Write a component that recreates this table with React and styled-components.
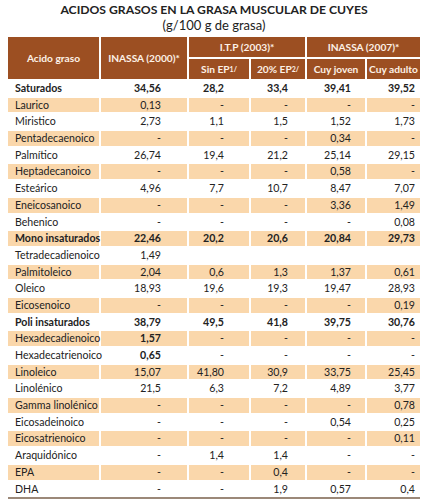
import styled, { createGlobalStyle } from "styled-components";

const GlobalStyle = createGlobalStyle`
  body {
    margin: 0;
    background: #fff;
    font-family: Lato, "Open Sans", sans-serif;
    color: #222;
  }
`;

const Page = styled.div`
  width: 427px;
  padding: 2px 7px 0 8px;
  box-sizing: border-box;
`;

const Title = styled.h1`
  margin: 0;
  text-align: center;
  font-size: 12.2px;
  line-height: 15px;
  font-weight: 700;
  color: #222;
`;

const Subtitle = styled.div`
  text-align: center;
  font-size: 13px;
  line-height: 16px;
  margin-bottom: 4px;
`;

const Grid = styled.div`
  display: grid;
  grid-template-columns: 91px 86px 60px 54px 58px 53px;
  grid-template-rows: 20px 20px repeat(25, 14.7px);
  gap: 2px;
  padding-bottom: 1px;
  border-bottom: 2px solid #9b8878;
  font-size: 10.6px;
`;

const HeadCell = styled.div`
  background: #9c4f22;
  color: #fdf1e6;
  font-weight: 700;
  font-size: 10.2px;
  display: flex;
  align-items: center;
  justify-content: center;
  white-space: nowrap;
  grid-column: ${(p) => p.$col || "auto"};
  grid-row: ${(p) => p.$row || "auto"};
`;

const Sup = styled.sup`
  font-size: 7px;
  line-height: 0;
  vertical-align: 4px;
`;

const Row = styled.div`
  display: contents;
`;

const Cell = styled.div`
  background: ${(p) => (p.$shaded ? "#fad7ab" : "transparent")};
  font-weight: ${(p) => (p.$bold ? 700 : 400)};
  display: flex;
  align-items: center;
  justify-content: flex-end;
  padding-right: ${(p) => p.$pad}px;
  white-space: nowrap;
  line-height: 1;
`;

const NameCell = styled(Cell)`
  justify-content: flex-start;
  padding-left: 7px;
  padding-right: 0;
`;

const pads = [26, 25, 17, 14, 5];

const rows = [
  ["Saturados", ["34,56", "28,2", "33,4", "39,41", "39,52"], true],
  ["Laurico", ["0,13", "-", "-", "-", "-"]],
  ["Miristico", ["2,73", "1,1", "1,5", "1,52", "1,73"]],
  ["Pentadecaenoico", ["-", "-", "-", "0,34", "-"]],
  ["Palmítico", ["26,74", "19,4", "21,2", "25,14", "29,15"]],
  ["Heptadecanoico", ["-", "-", "-", "0,58", "-"]],
  ["Esteárico", ["4,96", "7,7", "10,7", "8,47", "7,07"]],
  ["Eneicosanoico", ["-", "-", "-", "3,36", "1,49"]],
  ["Behenico", ["-", "-", "-", "-", "0,08"]],
  ["Mono insaturados", ["22,46", "20,2", "20,6", "20,84", "29,73"], true],
  ["Tetradecadienoico", ["1,49", "", "", "", ""]],
  ["Palmitoleico", ["2,04", "0,6", "1,3", "1,37", "0,61"]],
  ["Oleico", ["18,93", "19,6", "19,3", "19,47", "28,93"]],
  ["Eicosenoico", ["-", "-", "-", "-", "0,19"]],
  ["Poli insaturados", ["38,79", "49,5", "41,8", "39,75", "30,76"], true],
  ["Hexadecadienoico", ["1,57", "-", "-", "-", "-"], false, true],
  ["Hexadecatrienoico", ["0,65", "-", "-", "-", "-"], false, true],
  ["Linoleico", ["15,07", "41,80", "30,9", "33,75", "25,45"]],
  ["Linolénico", ["21,5", "6,3", "7,2", "4,89", "3,77"]],
  ["Gamma linolénico", ["-", "-", "-", "-", "0,78"]],
  ["Eicosadeinoico", ["-", "-", "-", "0,54", "0,25"]],
  ["Eicosatrienoico", ["-", "-", "-", "-", "0,11"]],
  ["Araquidónico", ["-", "1,4", "1,4", "-", "-"]],
  ["EPA", ["-", "-", "0,4", "-", "-"]],
  ["DHA", ["-", "-", "1,9", "0,57", "0,4"]],
];

export default function App() {
  return (
    <Page>
      <GlobalStyle />
      <Title>ACIDOS GRASOS EN LA GRASA MUSCULAR DE CUYES</Title>
      <Subtitle>(g/100 g de grasa)</Subtitle>
      <Grid>
        <HeadCell $col="1" $row="1 / span 2">Acido graso</HeadCell>
        <HeadCell $col="2" $row="1 / span 2">INASSA (2000)*</HeadCell>
        <HeadCell $col="3 / span 2" $row="1">I.T.P (2003)*</HeadCell>
        <HeadCell $col="5 / span 2" $row="1">INASSA (2007)*</HeadCell>
        <HeadCell $col="3" $row="2">
          Sin EP<Sup>1/</Sup>
        </HeadCell>
        <HeadCell $col="4" $row="2">
          20% EP<Sup>2/</Sup>
        </HeadCell>
        <HeadCell $col="5" $row="2">Cuy joven</HeadCell>
        <HeadCell $col="6" $row="2">Cuy adulto</HeadCell>
        {rows.map(([name, vals, bold, firstBold], i) => (
          <Row key={name}>
            <NameCell $shaded={i % 2 === 1} $bold={bold}>
              {name}
            </NameCell>
            {vals.map((v, j) => (
              <Cell
                key={j}
                $shaded={i % 2 === 1}
                $bold={bold || (firstBold && j === 0)}
                $pad={pads[j]}
              >
                {v}
              </Cell>
            ))}
          </Row>
        ))}
      </Grid>
    </Page>
  );
}
